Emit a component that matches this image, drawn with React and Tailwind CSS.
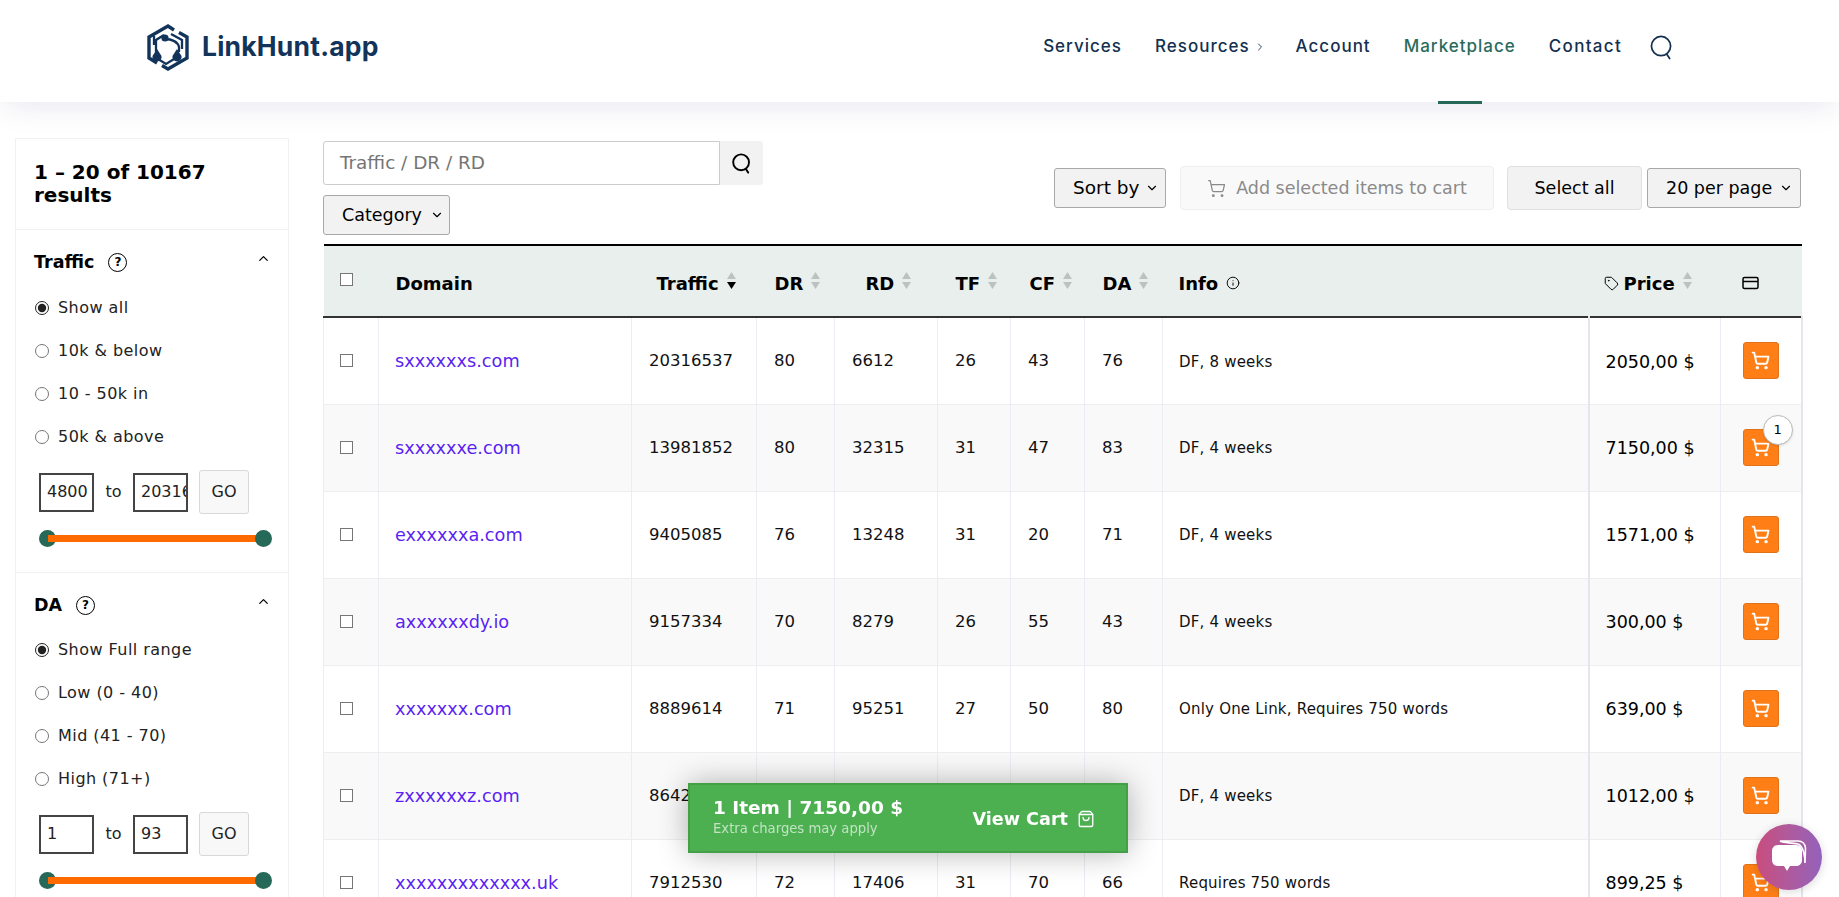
import React from "react";
import { ShoppingCart, ChevronUp, ChevronDown, ChevronRight, Info, Tag, ShoppingBag } from "lucide-react";

const BODY = "font-['DejaVu_Sans',Verdana,sans-serif]";

const rows = [
  ["sxxxxxxs.com", "20316537", "80", "6612", "26", "43", "76", "DF, 8 weeks", "2050,00 $"],
  ["sxxxxxxe.com", "13981852", "80", "32315", "31", "47", "83", "DF, 4 weeks", "7150,00 $"],
  ["exxxxxxa.com", "9405085", "76", "13248", "31", "20", "71", "DF, 4 weeks", "1571,00 $"],
  ["axxxxxxdy.io", "9157334", "70", "8279", "26", "55", "43", "DF, 4 weeks", "300,00 $"],
  ["xxxxxxx.com", "8889614", "71", "95251", "27", "50", "80", "Only One Link, Requires 750 words", "639,00 $"],
  ["zxxxxxxz.com", "8642117", "74", "21530", "29", "41", "68", "DF, 4 weeks", "1012,00 $"],
  ["xxxxxxxxxxxxx.uk", "7912530", "72", "17406", "31", "70", "66", "Requires 750 words", "899,25 $"],
];

function Logo() {
  return (
    <svg width="44" height="49" viewBox="0 0 44 49" fill="none" className="text-[#12345a]">
      <g stroke="currentColor" strokeWidth="3.4" strokeLinejoin="miter">
        <path d="M28 7 L22 3 L3 14 V35 L11 40" />
        <path d="M33 9.5 L41 14 V35 L22 46 L16 42.5" />
      </g>
      <g stroke="currentColor" strokeWidth="2.3">
        <path d="M10 29 V17 L18 12" />
        <path d="M19 16 C26 16 32 19 33 24 V29" />
        <path d="M8 13 V22" />
        <path d="M12 36 L20 41 L33 33" />
        <path d="M25 11 L36 17 V26" />
      </g>
      <circle cx="19" cy="15" r="3.6" fill="currentColor" />
      <path d="M11 26 L15.5 33 A4.6 4.6 0 1 1 6.5 33 Z" fill="currentColor" />
      <path d="M31 26 L35.5 33 A4.6 4.6 0 1 1 26.5 33 Z" fill="currentColor" />
    </svg>
  );
}

function SearchQ({ className, stroke = 2 }) {
  return (
    <svg viewBox="0 0 24 26" fill="none" stroke="currentColor" strokeWidth={stroke} strokeLinecap="round" className={className}>
      <circle cx="11.5" cy="11.5" r="10" />
      <path d="M17.5 20 L20.5 24.5" />
    </svg>
  );
}

function Sort({ active }) {
  return (
    <svg width="11" height="19" viewBox="0 0 11 19" className="ml-[7px] shrink-0 -mt-[5px]">
      <path d="M5.5 1 L10 8 H1 Z" fill="#bcc2c0" />
      <path d="M5.5 18 L10 11 H1 Z" fill={active ? "#000" : "#bcc2c0"} />
    </svg>
  );
}

function Help() {
  return (
    <span className="ml-[14px] flex h-[19px] w-[19px] items-center justify-center rounded-full border-[1.5px] border-black text-[12px] font-bold leading-none text-black">?</span>
  );
}

function Radio({ label, checked }) {
  return (
    <label className="flex h-[43px] items-center gap-[9px] pl-[1px] text-[16px] tracking-[0.45px] text-[#222]">
      <input type="radio" defaultChecked={checked} name={checked ? undefined : label} className="m-0 h-[14px] w-[14px] accent-[#222]" />
      <span>{label}</span>
    </label>
  );
}

function Range({ a, b }) {
  return (
    <>
      <div className="mt-[12px] flex items-center pl-[5px]">
        <div className="flex h-[39px] w-[55px] items-center overflow-hidden border-2 border-[#444] pl-[6px] text-[16px] text-[#222]">{a}</div>
        <span className="w-[39px] text-center text-[16px] text-[#222]">to</span>
        <div className="flex h-[39px] w-[55px] items-center overflow-hidden whitespace-nowrap border-2 border-[#444] pl-[6px] text-[16px] text-[#222]">{b}</div>
        <button className="ml-[11px] h-[44px] w-[50px] rounded-[3px] border border-[#d8d8d8] bg-[#f8f8f8] text-[16px] text-[#222]">GO</button>
      </div>
      <div className="-mr-[2px] mt-[16px] flex items-center pl-[5px]">
        <span className="-mr-[8px] h-[17px] w-[17px] rounded-full bg-[#266958]" />
        <span className="h-[7px] flex-1 bg-[#ff6a00]" />
        <span className="-ml-[8px] h-[17px] w-[17px] rounded-full bg-[#266958]" />
      </div>
    </>
  );
}

function SectionHead({ title }) {
  return (
    <div className="flex items-center justify-between">
      <div className="flex items-center text-[17.5px] font-bold text-black">
        {title}
        <Help />
      </div>
      <ChevronUp size={15} strokeWidth={2} className="-mr-[1px] -mt-[8px] text-black" />
    </div>
  );
}

function Sidebar() {
  return (
    <aside className="w-[274px] shrink-0 border border-[#f1f1f1] bg-white">
      <div className="h-[91px] border-b border-[#f1f1f1] px-[18px] pt-[22px] text-[20px] font-bold leading-[23px] text-black">
        1 – 20 of 10167 results
      </div>
      <div className="h-[343px] border-b border-[#f1f1f1] px-[18px] pt-[19px]">
        <SectionHead title="Traffic" />
        <div className="mt-[11px] flex flex-col">
          {["Show all", "10k & below", "10 - 50k in", "50k & above"].map((l, i) => (
            <Radio key={l} label={l} checked={i === 0} />
          ))}
        </div>
        <Range a="4800" b="20316537" />
      </div>
      <div className="px-[18px] pt-[19px]">
        <SectionHead title="DA" />
        <div className="mt-[10px] flex flex-col">
          {["Show Full range", "Low (0 - 40)", "Mid (41 - 70)", "High (71+)"].map((l, i) => (
            <Radio key={l} label={l} checked={i === 0} />
          ))}
        </div>
        <Range a="1" b="93" />
      </div>
    </aside>
  );
}

function SelectBtn({ label, className }) {
  return (
    <button className={`flex h-[40px] items-center rounded-[3px] border border-[#a8a8a8] bg-[#f2f2f2] pl-[18px] text-black ${className}`}>
      {label}
      <ChevronDown size={14} strokeWidth={2} />
    </button>
  );
}

function Toolbar() {
  return (
    <div className="mb-[9px] mt-[3px] flex items-center justify-between">
      <div className="flex w-[440px] flex-col gap-[10px]">
        <div className="flex h-[44px]">
          <div className="flex flex-1 items-center rounded-l-[3px] border border-[#ccc] bg-white pl-[16px] text-[18.4px] text-[#757575]">Traffic / DR / RD</div>
          <button className="flex w-[43px] items-center justify-center rounded-r-[3px] bg-[#f2f2f2] text-black">
            <SearchQ className="h-[21px] w-[19px]" stroke={2.4} />
          </button>
        </div>
        <SelectBtn label="Category" className="w-[127px] gap-[8px] text-[17.5px]" />
      </div>
      <div className="flex items-center">
        <SelectBtn label="Sort by" className="w-[112px] gap-[5px] text-[18.5px]" />
        <button className="ml-[14px] flex h-[44px] w-[314px] items-center justify-center gap-[10px] rounded-[4px] border border-[#eee] bg-[#f9f9f9] text-[17.5px] text-[#8a8a8a]">
          <ShoppingCart size={19} strokeWidth={1.6} />
          Add selected items to cart
        </button>
        <button className="ml-[13px] h-[44px] w-[135px] rounded-[4px] border border-[#e0e0e0] bg-[#f2f2f2] text-[17.5px] text-black">Select all</button>
        <SelectBtn label="20 per page" className="ml-[5px] w-[154px] gap-[7px] text-[17.5px]" />
      </div>
    </div>
  );
}

function Th({ children, className = "", sort, active }) {
  return (
    <th className={`p-0 pt-[4px] text-left align-middle text-[18px] font-bold text-black ${className}`}>
      <div className="flex items-center">
        {children}
        {sort && <Sort active={active} />}
      </div>
    </th>
  );
}

function Table() {
  const cell = "border-r border-[#ececf2] pt-[2px] align-middle";
  const num = `${cell} pl-[17px] text-[16.5px] text-[#111]`;
  const box = "m-0 block h-[13px] w-[13px] appearance-none border border-[#767676] bg-white";
  return (
    <table className="w-full table-fixed border-collapse">
      <colgroup>
        <col className="w-[55px]" />
        <col className="w-[253px]" />
        <col className="w-[125px]" />
        <col className="w-[78px]" />
        <col className="w-[103px]" />
        <col className="w-[73px]" />
        <col className="w-[74px]" />
        <col className="w-[78px]" />
        <col className="w-[426px]" />
        <col className="w-[132px]" />
        <col className="w-[81px]" />
      </colgroup>
      <thead>
        <tr className="h-[72px] border-b-2 border-t-2 border-b-[#333] border-t-black bg-[#e9efed]">
          <th className="p-0 pb-[4px] pl-[16px] text-left align-middle"><input type="checkbox" className={box} /></th>
          <Th className="pl-[17px]">Domain</Th>
          <Th className="pl-[25px]" sort active>Traffic</Th>
          <Th className="pl-[18px]" sort>DR</Th>
          <Th className="pl-[31px]" sort>RD</Th>
          <Th className="pl-[18px]" sort>TF</Th>
          <Th className="pl-[19px]" sort>CF</Th>
          <Th className="pl-[18px]" sort>DA</Th>
          <Th className="pl-[16px]">
            Info
            <Info size={14} strokeWidth={1.6} className="ml-[8px]" />
          </Th>
          <Th className="pl-[15px]" sort>
            <Tag size={15} strokeWidth={1.6} className="mr-[5px]" />
            Price
          </Th>
          <th className="p-0 pl-[21px] pt-[4px] text-left align-middle">
            <svg width="17" height="16" viewBox="0 0 17 16" fill="none" stroke="#000" strokeWidth="1.5">
              <rect x="1" y="2.5" width="15" height="11" rx="1.5" />
              <path d="M1 6.5 H16" />
            </svg>
          </th>
        </tr>
      </thead>
      <tbody>
        {rows.map((r, i) => (
          <tr key={r[0]} className={`h-[87px] border-b border-[#eeeeee] ${i % 2 ? "bg-[#f9f9f9]" : "bg-white"}`}>
            <td className="border-x border-[#ececf2] pl-[16px] align-middle"><input type="checkbox" className={box} /></td>
            <td className={`${cell} pl-[16px]`}><a className="text-[17.7px] text-[#5a1ff2]">{r[0]}</a></td>
            <td className={num}>{r[1]}</td>
            <td className={num}>{r[2]}</td>
            <td className={num}>{r[3]}</td>
            <td className={num}>{r[4]}</td>
            <td className={num}>{r[5]}</td>
            <td className={num}>{r[6]}</td>
            <td className="border-r-2 border-[#e4e6ee] pl-[16px] pt-[2px] align-middle text-[15px] tracking-[0.2px] text-[#111]">{r[7]}</td>
            <td className={`${cell} pl-[16px] text-[17.5px] text-black`}>{r[8]}</td>
            <td className="border-r-2 border-[#e4e6ee] align-middle">
              <div className="relative mx-auto flex h-[37px] w-[36px] items-center justify-center rounded-[3px] border border-[#e0731a] bg-[#ff7f16] text-white">
                <ShoppingCart size={19} strokeWidth={2.4} />
                {i === 1 && (
                  <span className="absolute -right-[15px] -top-[15px] flex h-[30px] w-[30px] items-center justify-center rounded-full border border-[#bbb] bg-white text-[13px] text-black shadow-sm">1</span>
                )}
              </div>
            </td>
          </tr>
        ))}
      </tbody>
    </table>
  );
}

export default function App() {
  return (
    <div className={`h-screen overflow-hidden bg-white ${BODY}`}>
      <header className="relative z-10 flex h-[102px] items-center justify-between bg-white pb-[8px] pl-[146px] pr-[166px] shadow-[0_6px_30px_-4px_rgba(40,40,110,0.12)]">
        <div className="flex items-center gap-[12px]">
          <Logo />
          <span className="font-['Inter',sans-serif] text-[26.5px] font-bold tracking-[0.2px] text-[#12345a]">LinkHunt.app</span>
        </div>
        <nav className="flex items-center font-['Inter',sans-serif] text-[17px] font-medium tracking-[1px] text-[#14304f]">
          <a>Services</a>
          <a className="ml-[33px] flex items-center">Resources<ChevronRight size={12} strokeWidth={1.8} className="ml-[4px]" /></a>
          <a className="ml-[30px]">Account</a>
          <a className="relative ml-[33px] text-[#2a6b5b]">
            Marketplace
            <span className="absolute -bottom-[44px] left-1/2 h-[3px] w-[44px] -translate-x-1/2 bg-[#266958]" />
          </a>
          <a className="ml-[33px] tracking-[1.3px]">Contact</a>
          <SearchQ className="ml-[28px] h-[25px] w-[23px]" stroke={1.8} />
        </nav>
      </header>
      <div className="flex gap-[34px] pl-[15px] pr-[38px] pt-[36px]">
        <Sidebar />
        <main className="min-w-0 flex-1">
          <Toolbar />
          <Table />
        </main>
      </div>

      <div className="fixed bottom-[44px] left-[688px] flex h-[70px] w-[440px] items-center justify-between border-2 border-[#43a047] bg-[#4caf50] pl-[23px] pr-[31px] text-white shadow-[0_0_30px_rgba(0,0,0,0.3)]">
        <div className="-mt-[3px]">
          <div className="text-[18.5px] font-bold leading-[24px]">1 Item | 7150,00 $</div>
          <div className="text-[13.2px] leading-[17px] text-white/65">Extra charges may apply</div>
        </div>
        <div className="flex items-center gap-[9px] pt-[3px] text-[17.6px] font-bold">
          View Cart
          <ShoppingBag size={18} strokeWidth={1.8} />
        </div>
      </div>

      <button className="fixed bottom-[7px] right-[17px] flex h-[66px] w-[66px] items-center justify-center rounded-full bg-gradient-to-r from-[#c94c7c] to-[#9361bb] shadow-[0_2px_10px_rgba(0,0,0,0.15)]">
        <svg width="38" height="36" viewBox="0 0 38 36">
          <path d="M10 2 H28 C33 2 35 5 35.5 9 L35 24 C35 20 34 7 28 5 C24 4 14 4 10 2 Z" fill="none" stroke="#fff" strokeWidth="1.6" />
          <path d="M8 6 H26 C30 6 32 9 32 12 V21 C32 25 29 27 26 27 H20 L17 32 L14 27 H8 C4 27 2 24 2 21 V12 C2 9 4 6 8 6 Z" fill="#fff" />
        </svg>
      </button>
    </div>
  );
}
